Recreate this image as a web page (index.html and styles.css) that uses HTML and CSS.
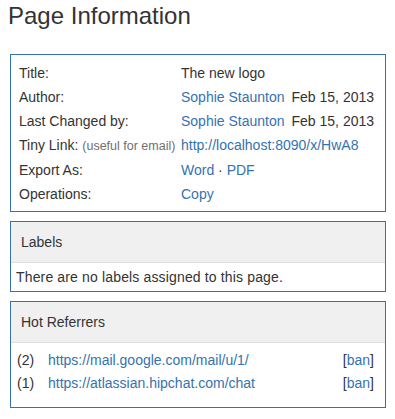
FILE: index.html
```html
<!DOCTYPE html>
<html lang="en">
<head>
    <meta charset="UTF-8">
    <title>Page Information</title>
    <link rel="stylesheet" href="styles.css">
</head>
<body>

<h1 class="page-title">Page Information</h1>

<!-- General info -->
<div class="panel info-panel">
    <div class="info-row">
        <span class="info-label">Title:</span>
        <span class="info-value">The new logo</span>
    </div>
    <div class="info-row">
        <span class="info-label">Author:</span>
        <span class="info-value"><a href="#">Sophie Staunton</a><span class="date">Feb 15, 2013</span></span>
    </div>
    <div class="info-row">
        <span class="info-label">Last Changed by:</span>
        <span class="info-value"><a href="#">Sophie Staunton</a><span class="date">Feb 15, 2013</span></span>
    </div>
    <div class="info-row">
        <span class="info-label">Tiny Link: <span class="hint">(useful for email)</span></span>
        <span class="info-value"><a href="#">http://localhost:8090/x/HwA8</a></span>
    </div>
    <div class="info-row">
        <span class="info-label">Export As:</span>
        <span class="info-value"><a href="#">Word</a> · <a href="#">PDF</a></span>
    </div>
    <div class="info-row">
        <span class="info-label">Operations:</span>
        <span class="info-value"><a href="#">Copy</a></span>
    </div>
</div>

<!-- Labels -->
<div class="panel">
    <div class="panel-header">Labels</div>
    <div class="panel-body labels-body">There are no labels assigned to this page.</div>
</div>

<!-- Hot referrers -->
<div class="panel">
    <div class="panel-header">Hot Referrers</div>
    <div class="panel-body referrers-body">
        <div class="ref-row">
            <span class="ref-count">(2)</span>
            <a class="ref-link" href="#">https://mail.google.com/mail/u/1/</a>
            <span class="ref-ban">[<a href="#">ban</a>]</span>
        </div>
        <div class="ref-row">
            <span class="ref-count">(1)</span>
            <a class="ref-link" href="#">https://atlassian.hipchat.com/chat</a>
            <span class="ref-ban">[<a href="#">ban</a>]</span>
        </div>
    </div>
</div>

</body>
</html>
```

FILE: styles.css
```css
body {
    margin: 0;
    padding: 0 9px 0 10px;
    font-family: "Liberation Sans", Arial, sans-serif;
    font-size: 14px;
    color: #333;
}

a {
    color: #3572b0;
    text-decoration: none;
}

.page-title {
    font-size: 24px;
    font-weight: normal;
    line-height: 29px;
    margin: 1px 0 24px -2px;
}

.panel {
    border: 1px solid #3572b0;
    margin-bottom: 9px;
}

.info-panel {
    padding: 6px 8px 5px;
}

.info-row {
    display: flex;
    line-height: 24px;
    white-space: nowrap;
}

.info-label {
    width: 162px;
    flex-shrink: 0;
}

.hint {
    font-size: 12.5px;
    color: #707070;
}

.date {
    margin-left: 7px;
}

.panel-header {
    background-color: #f0f0f0;
    border-bottom: 1px solid #ddd;
    padding: 10px 10px;
    line-height: 20px;
}

.panel-body {
    line-height: 20px;
}

.labels-body {
    padding: 4px 5px;
    letter-spacing: 0.15px;
}

.referrers-body {
    padding: 6px 11px 12px 6px;
}

.ref-row {
    display: flex;
    line-height: 23px;
}

.ref-count {
    width: 31px;
}

.ref-link {
    flex-grow: 1;
}
```
